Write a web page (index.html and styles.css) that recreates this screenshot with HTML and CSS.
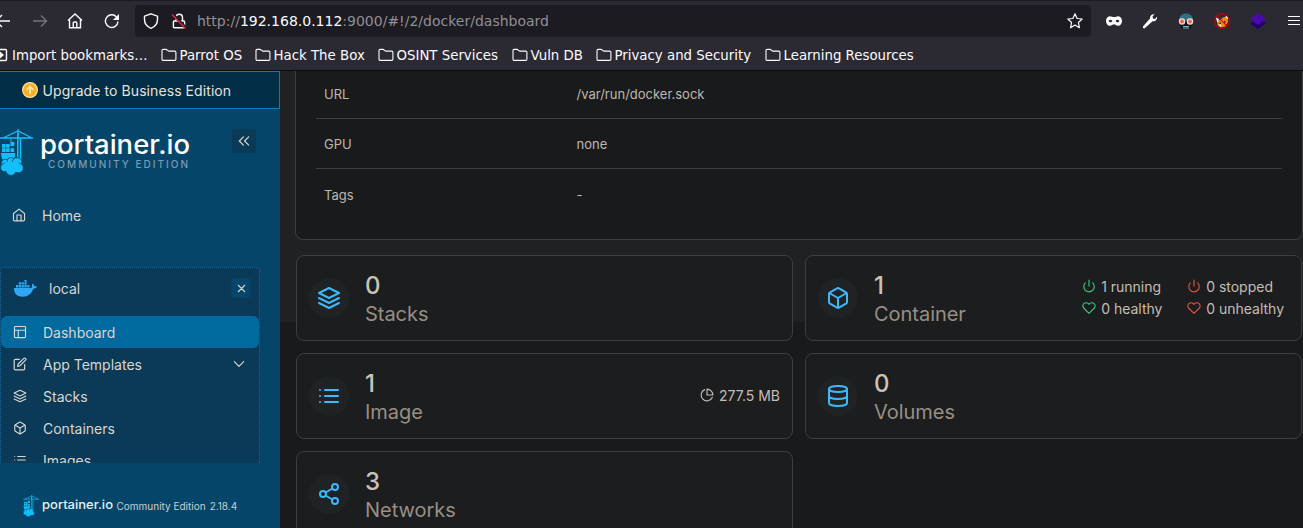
FILE: index.html
```html
<!DOCTYPE html>
<html lang="en">
<head>
<meta charset="utf-8">
<title>Portainer</title>
<link rel="stylesheet" href="styles.css">
</head>
<body>
<svg width="0" height="0" class="defs">
  <symbol id="folder" viewBox="0 0 16 16"><path d="M1 12.200V3.600c0-.7.5-1.200 1.200-1.200h2.800c.9 0 1.700 1.700 2.700 1.700h6c.7 0 1.200.5 1.200 1.200v6.900c0 .7-.5 1.200-1.200 1.200H2.200c-.7 0-1.200-.5-1.200-1.200z"/></symbol>
  <symbol id="layers" viewBox="0 0 24 24"><path d="M12 2 2 7l10 5 10-5-10-5zM2 17l10 5 10-5M2 12l10 5 10-5"/></symbol>
  <symbol id="box" viewBox="0 0 24 24"><path d="M21 8a2 2 0 0 0-1-1.730l-7-4a2 2 0 0 0-2 0l-7 4A2 2 0 0 0 3 8v8a2 2 0 0 0 1 1.730l7 4a2 2 0 0 0 2 0l7-4A2 2 0 0 0 21 16zM3.300 7 12 12l8.700-5M12 22V12"/></symbol>
  <symbol id="list" viewBox="0 0 24 24"><path d="M8 6h13M8 12h13M8 18h13M3 6h.01M3 12h.01M3 18h.01"/></symbol>
  <symbol id="power" viewBox="0 0 24 24"><path d="M18.400 6.600a9 9 0 1 1-12.770.04M12 2v10"/></symbol>
  <symbol id="heart" viewBox="0 0 24 24"><path d="M20.840 4.610a5.500 5.500 0 0 0-7.780 0L12 5.670l-1.060-1.060a5.500 5.500 0 0 0-7.780 7.780L12 21.230l8.840-8.840a5.500 5.500 0 0 0 0-7.780z"/></symbol>
  <symbol id="crane" viewBox="0 0 33 47">
    <path fill="none" stroke="currentColor" stroke-width="1.300" d="M0 9h33M3 9l15-7 14 7M18 0v9"/>
    <path fill="none" stroke="currentColor" stroke-width="1.500" d="M17.800 4v26M20.500 9v22"/>
    <path fill="currentColor" d="M10.500 10h1v3h2.800v4h-3.800zM2 15h3.600v3.700H2zM6.100 15h3.600v3.700H6.100zM2 19.300h3.600V23H2zM6.100 19.300h3.600V23H6.100zM10.500 19.300h3.600V23h-3.600zM1 24h14v4q-2 3-5 4H4q-3-3-3-8z"/>
    <g fill="currentColor" stroke="#044569" stroke-width=".8"><circle cx="5.500" cy="34.500" r="4.200"/><circle cx="11" cy="32.500" r="4"/><circle cx="17" cy="33.500" r="4.800"/><circle cx="4.800" cy="38.500" r="4.200"/><circle cx="18.500" cy="39" r="4.800"/><circle cx="11" cy="41.500" r="5"/></g>
    <path fill="currentColor" d="M5 33h13l3 5-4 5H7l-4-4z"/>
  </symbol>
</svg>
<div class="browser">
  <div class="toolbar">
    <svg class="nav-i i-back" viewBox="0 0 16 16"><path d="M15 8H1M7 2 1 8l6 6"/></svg>
    <svg class="nav-i i-fwd" viewBox="0 0 16 16"><path d="M1 8h13M9 2.500 14.500 8 9 13.500"/></svg>
    <svg class="nav-i i-home" viewBox="0 0 16 16"><path d="M1 7.500 8 1l7 6.500M2.500 6.500v8.200h11V6.500M6.200 14.500V10q0-1 1-1h1.600q1 0 1 1v4.500"/></svg>
    <svg class="nav-i i-reload" viewBox="0 0 16 16"><path d="M14 8.500A6.300 6.300 0 1 1 12.500 4"/><path fill="currentColor" stroke="none" d="M15 1v6H9z"/></svg>
    <div class="urlbar">
      <svg class="nav-i i-shield" viewBox="0 0 16 16"><path d="M8 .8 14.500 3.200v3.300c0 4-2.500 7.200-6.500 8.800C4 13.700 1.500 10.500 1.500 6.500V3.200z"/></svg>
      <svg class="nav-i i-lock" viewBox="0 0 16 16"><path d="M3.200 8h9.600q.8 0 .8.800v5q0 1-1 1H3.400q-1 0-1-1v-5q0-.8.8-.8zM5 8V4.500a3 3 0 0 1 6.500 0V8"/><path stroke="#1c1b22" stroke-width="3" d="M1.500 1 15 15"/><path stroke="#e22850" d="M1 1.500 14.500 15.500"/></svg>
      <div class="url">http://<b>192.168.0.112</b>:9000/#!/2/docker/dashboard</div>
      <svg class="nav-i i-star" viewBox="0 0 16 16"><path stroke-width="1.200" stroke-linejoin="round" d="m8 .8 2.100 4.700 5.100.5-3.800 3.500 1 5.200L8 12.100l-4.400 2.600 1-5.200L.8 6l5.100-.5z"/></svg>
    </div>
    <div class="exts">
      <svg class="ext" viewBox="0 0 16 16"><path fill="#fff" fill-rule="evenodd" d="M3.800 3.200C5.500 3.200 6.500 4.200 8 4.200s2.500-1 4.200-1C14.500 3.200 16 5.500 16 8s-1.500 4.800-3.800 4.800c-1.800 0-3-1.600-4.200-1.600s-2.400 1.600-4.200 1.600C1.500 12.800 0 10.500 0 8s1.500-4.800 3.800-4.800zM2.500 8.100c1.300 1.900 2.700 1.900 4 0-1.300-1.700-2.700-1.700-4 0zm7 0c1.300 1.900 2.700 1.900 4 0-1.300-1.700-2.700-1.700-4 0z"/></svg>
      <svg class="ext" viewBox="0 0 16 16"><path fill="#fff" d="M8 5.500C7.700 3 9.500 1 12.500 1.200L10.500 3.500l.5 2 2 .5 2-2.300C15.500 6.500 13.500 8.800 10.500 8.300L3 15q-1 .8-1.800 0t0-1.800z"/></svg>
      <svg class="ext" viewBox="0 0 16 16"><path fill="#2e6f80" d="M1 7C1 3 4 .5 8 .5S15 3 15 7v1.500H1z"/><path fill="#15161c" d="M2.500 8h11v7.500h-11z"/><path stroke="#67b8cb" d="M5 13.500h6M5 15h6"/><circle cx="4" cy="8.500" r="2.600" fill="#ef654c" stroke="#f6dfd8" stroke-width="1.200"/><circle cx="12" cy="8.500" r="2.600" fill="#ef654c" stroke="#f6dfd8" stroke-width="1.200"/></svg>
      <svg class="ext" viewBox="0 0 16 16"><path fill="#f28a12" d="m3.500 8 3-1.500L9 4.500l4-1L14 9l-3 4.500-4 1L3.500 12z"/><path fill="#fff" d="m1.800 4.500 3.200 1.500-1.500 4zm2.500 7 3 0-.3 2.700zm7-8.500 2.700.5v3.500z"/><path fill="#222" d="M5.500 9.500H7V11H5.500zM10 8h1.500v1.500H10z"/><g fill="none" stroke="#c90000" stroke-width="1.100"><circle cx="8" cy="8" r="7.400"/><path d="m2.800 2.800 10.400 10.400"/></g></svg>
      <svg class="ext" viewBox="0 0 16 16"><path fill="#21006e" d="m8 5.500 8 5L8 16l-8-5.500z"/><path fill="#4b0aad" d="m8 0 8 6-8 6-8-6z"/></svg>
      <svg class="ext" viewBox="0 0 16 16"><path stroke="#fbfbfe" stroke-width="1.200" d="M2 3.500h12M2 7.500h12M2 11.500h12"/></svg>
    </div>
  </div>
  <div class="bookmarks">
    <svg class="nav-i i-import" viewBox="0 0 16 16"><path d="M4 2.500h9.500q1 0 1 1v9q0 1-1 1H4M5 8h5"/><path fill="currentColor" stroke="none" d="m8 4.500 4 3.500-4 3.500z"/></svg>
    <span class="bm first">Import bookmarks…</span>
    <span class="bm" style="width:94px"><svg><use href="#folder"/></svg>Parrot OS</span>
    <span class="bm" style="width:123px"><svg><use href="#folder"/></svg>Hack The Box</span>
    <span class="bm" style="width:134px"><svg><use href="#folder"/></svg>OSINT Services</span>
    <span class="bm" style="width:84px"><svg><use href="#folder"/></svg>Vuln DB</span>
    <span class="bm" style="width:169px"><svg><use href="#folder"/></svg>Privacy and Security</span>
    <span class="bm"><svg><use href="#folder"/></svg>Learning Resources</span>
  </div>
</div>
<div class="app">
  <aside class="sidebar">
    <div class="upgrade">
      <svg width="16" height="16" viewBox="0 0 16 16"><circle cx="8" cy="8" r="7.400" fill="#fdb022" stroke="#fedf9c" stroke-width="1.200"/><path fill="none" stroke="#fff1d0" stroke-width="1.500" d="M8 12V4.700M4.800 7.800 8 4.500l3.200 3.300"/></svg>
      <span>Upgrade to Business Edition</span>
    </div>
    <div class="brand">
      <svg class="crane" width="33" height="47"><use href="#crane"/></svg>
      <svg class="wordmark" width="152" height="48"><text x="0" y="25" class="wm" textLength="150" lengthAdjust="spacingAndGlyphs">portainer.io</text><text x="8" y="39" class="wm-sub" textLength="140">COMMUNITY EDITION</text></svg>
      <span class="collapse"><svg class="ic" width="14" height="14" viewBox="0 0 24 24"><path d="m11 19-7-7 7-7M20 19l-7-7 7-7"/></svg></span>
    </div>
    <div class="home"><svg class="ic" width="14" height="14" viewBox="0 0 24 24"><path d="M2.500 9.500 12 2l9.500 7.500V20a2 2 0 0 1-2 2h-15a2 2 0 0 1-2-2zM8.500 22V12h7v10"/></svg><span>Home</span></div>
    <div class="env">
      <div class="env-head">
        <svg width="23" height="17" viewBox="0 0 23 17"><path fill="#2fa8f6" d="M0 8h16.800c1-.3 1.500-.8 1.300-2-.4-1 0-1.700.6-2.400 1 .7 1.400 1.500 1.500 2.600 1-.2 1.900 0 2.700.5-.6 1.300-1.800 1.900-3.400 1.800C17.500 13.800 14 16.700 8.500 16.700 3 16.700 0 13.500 0 8zM2 5h2.300v2.400H2zM4.800 5h2.300v2.400H4.800zM7.600 5h2.300v2.400H7.600zM10.400 5h2.300v2.400h-2.300zM13.200 5h2.200v2.400h-2.200zM4.800 2.200h2.300v2.300H4.800zM7.600 2.200h2.300v2.300H7.600zM10.400 2.200h2.300v2.300h-2.300zM10.400 0h2.300v1.700h-2.300z"/></svg>
        <span>local</span>
        <span class="close"><svg class="ic" width="13" height="13" viewBox="0 0 24 24"><path d="M18 6 6 18M6 6l12 12"/></svg></span>
      </div>
      <div class="item active"><svg class="ic" viewBox="0 0 24 24"><path d="M4 2.500h16q1.500 0 1.500 1.500v16q0 1.500-1.500 1.500H4q-1.500 0-1.500-1.500V4q0-1.500 1.500-1.500zM2.500 9h19M9 21.500V9"/></svg><span>Dashboard</span></div>
      <div class="item"><svg class="ic" viewBox="0 0 24 24"><path d="M11 4H4a2 2 0 0 0-2 2v14a2 2 0 0 0 2 2h14a2 2 0 0 0 2-2v-7M18.500 2.500a2.120 2.120 0 0 1 3 3L12 15l-4 1 1-4z"/></svg><span>App Templates</span><svg class="ic chev" viewBox="0 0 24 24"><path d="m4 8 8 8 8-8"/></svg></div>
      <div class="item"><svg class="ic"><use href="#layers"/></svg><span>Stacks</span></div>
      <div class="item"><svg class="ic"><use href="#box"/></svg><span>Containers</span></div>
      <div class="item"><svg class="ic"><use href="#list"/></svg><span>Images</span></div>
    </div>
    <div class="foot">
      <svg width="16" height="22" viewBox="0 0 33 47" preserveAspectRatio="none"><use href="#crane" width="33" height="47"/></svg>
      <svg class="foot-wm" width="72" height="22"><text x="0" y="14" class="wm small" textLength="71" lengthAdjust="spacingAndGlyphs">portainer.io</text></svg>
      <span>Community Edition</span><span class="ver">2.18.4</span>
    </div>
  </aside>
  <main class="main">
    <section class="info">
      <div class="row"><span>URL</span><span>/var/run/docker.sock</span></div>
      <div class="row"><span>GPU</span><span>none</span></div>
      <div class="row"><span>Tags</span><span>-</span></div>
    </section>
    <section class="cards">
      <div class="card"><span class="disc"><svg class="ic"><use href="#layers"/></svg></span><div class="txt"><div class="num">0</div><div class="lbl">Stacks</div></div></div>
      <div class="card"><span class="disc"><svg class="ic"><use href="#box"/></svg></span><div class="txt"><div class="num">1</div><div class="lbl">Container</div></div>
        <div class="stats">
          <span class="ok"><svg class="ic"><use href="#power"/></svg><i>1 running</i></span><span class="bad"><svg class="ic"><use href="#power"/></svg><i>0 stopped</i></span>
          <span class="ok"><svg class="ic"><use href="#heart"/></svg><i>0 healthy</i></span><span class="bad"><svg class="ic"><use href="#heart"/></svg><i>0 unhealthy</i></span>
        </div></div>
      <div class="card"><span class="disc"><svg class="ic"><use href="#list"/></svg></span><div class="txt"><div class="num">1</div><div class="lbl">Image</div></div>
        <div class="size"><svg class="ic" viewBox="0 0 24 24"><path d="M21.210 15.890A10 10 0 1 1 8 2.830M22 12A10 10 0 0 0 12 2v10z"/></svg><span>277.5 MB</span></div></div>
      <div class="card"><span class="disc"><svg class="ic" viewBox="0 0 24 24"><ellipse cx="12" cy="5" rx="9" ry="3"/><path d="M21 12c0 1.660-4 3-9 3s-9-1.340-9-3M3 5v14c0 1.660 4 3 9 3s9-1.340 9-3V5"/></svg></span><div class="txt"><div class="num">0</div><div class="lbl">Volumes</div></div></div>
      <div class="card"><span class="disc"><svg class="ic" viewBox="0 0 24 24"><circle cx="18" cy="5" r="3"/><circle cx="6" cy="12" r="3"/><circle cx="18" cy="19" r="3"/><path d="m8.590 13.510 6.830 3.980M15.410 6.510l-6.820 3.980"/></svg></span><div class="txt"><div class="num">3</div><div class="lbl">Networks</div></div></div>
    </section>
  </main>
</div>
</body>
</html>
```
FILE: styles.css
```css
* { box-sizing: border-box; }
body { margin: 0; width: 1303px; height: 528px; overflow: hidden; background: #191a1c; font-family: Inter, sans-serif; }
svg { flex: none; display: block; }
.defs { display: none; }
.browser { height: 71px; background: #2b2a33; border-top: 1px solid #1c1b22; border-bottom: 1px solid #0c0c0d; color: #fbfbfe; font-family: "DejaVu Sans", sans-serif; overflow: hidden; }
.toolbar { height: 39px; display: flex; align-items: center; }
.nav-i { width: 16px; height: 16px; fill: none; stroke: currentColor; stroke-width: 1.4; }
.i-back { margin-left: -5px; }
.i-fwd { margin-left: 21px; color: #75747b; }
.i-home { margin-left: 19px; margin-right: 21px; }
.urlbar { margin-left: 15px; width: 956px; height: 32px; margin-top: 1px; border-radius: 4px; background: #1c1b22; display: flex; align-items: center; padding: 0 8px; }
.i-lock { margin-left: 12px; }
.url { margin-left: 10px; font-size: 14px; color: #8f8f96; white-space: nowrap; flex: 1; }
.url b { font-weight: 400; color: #fbfbfe; }
.exts { display: flex; margin-left: 15px; gap: 20px; }
.ext { width: 16px; height: 16px; }
.bookmarks { height: 30px; display: flex; align-items: center; font-size: 13.33px; white-space: nowrap; }
.i-import { margin-left: -8px; }
.bm { display: flex; align-items: center; gap: 3px; flex: none; }
.bm.first { width: 148.500px; margin-left: 4px; }
.bm svg { width: 16px; height: 16px; fill: none; stroke: #fbfbfe; stroke-width: 1.1; }
.app { display: flex; height: 457px; }
.sidebar { width: 280px; flex: none; background: #044569; color: #d8d6d2; font-size: 14px; display: flex; flex-direction: column; overflow: hidden; }
.ic { fill: none; stroke: currentColor; stroke-width: 2; stroke-linecap: round; stroke-linejoin: round; }
.upgrade { height: 38px; background: #022d46; border: 1px solid #0080c0; border-left: 0; display: flex; align-items: center; padding-left: 22px; gap: 4.5px; color: #e4e2de; letter-spacing: .08px; }
.brand { height: 90px; padding-top: 20px; display: flex; align-items: flex-start; }
.crane, .foot svg:first-child { color: #13bef9; }
.wordmark { margin-left: 7px; overflow: visible; }
.wm { font: 500 26px Inter, sans-serif; fill: #fff; }
.wm-sub { font: 500 10px Inter, sans-serif; fill: #7c9ab0; }
.collapse { width: 24px; height: 24px; border-radius: 4px; background: #0b3a57; margin-left: 40px; display: grid; place-items: center; }
.home { height: 34px; display: flex; align-items: center; padding: 0 0 2px 12px; gap: 16px; margin-bottom: 34px; }
.env { width: 260px; height: 196px; overflow: hidden; background: #0a3a57; border: 1px dotted #12679a; border-bottom: 0; border-radius: 4px 4px 0 0; }
.env-head { height: 48px; padding: 0 8px 8px 13px; display: flex; align-items: center; }
.env-head > span:nth-child(2) { margin-left: 12px; flex: 1; }
.close { width: 20px; height: 20px; border-radius: 4px; background: #044569; display: grid; place-items: center; }
.item { height: 32px; padding: 0 13px 0 12px; display: flex; align-items: center; }
.item .ic { width: 14px; height: 14px; }
.item span { margin-left: 16px; flex: 1; }
.active { background: #006a9f; border-radius: 6px; }
.foot { height: 65px; padding: 21px 0 0 22.5px; display: flex; align-items: center; font-size: 10px; color: #c8cfd2; }
.foot-wm { margin: 0 3px 0 3px; }
.wm.small { font-size: 12.5px; font-weight: 500; fill: #e8eef0; }
.ver { margin-left: 4px; }
.main { flex: 1; min-width: 0; padding: 0 0 0 15px; background: linear-gradient(#202123 0 251px, #191a1c 251px); }
.info { height: 169px; border: 1px solid #3c3e41; border-top: 0; border-radius: 0 0 8px 8px; background: #191a1b; padding: 0 20px; color: #bdb8b0; font-size: 13px; }
.row { display: flex; height: 50px; border-bottom: 1px solid #3c3e41; align-items: center; padding-left: 8px; padding-top: 1px; }
.row:first-child { height: 48px; padding-top: 0; padding-bottom: 1px; }
.row:last-child { border-bottom: 0; }
.row span:first-child { width: 252.5px; }
.cards { display: grid; grid-template-columns: 497px 497px; grid-auto-rows: 86px; gap: 12px; padding: 15px 0 0 1px; }
.card { border: 1px solid #3c3e41; border-radius: 8px; background: #1c1d1f; display: flex; align-items: center; padding: 0 12px; }
.disc { width: 40px; height: 40px; border-radius: 50%; background: #1f2324; color: #3db8fd; display: grid; place-items: center; }
.disc .ic { width: 24px; height: 24px; }
.txt { margin-left: 16px; flex: 1; padding-top: 3px; }
.num { font-size: 24px; line-height: 29px; color: #c9c2b8; font-weight: 500; }
.lbl { font-size: 20px; line-height: 29px; color: #988f83; letter-spacing: -.03px; }
.stats { display: grid; grid-template-columns: 105px auto; grid-auto-rows: 22px; font-size: 14px; color: #c3beb6; align-items: center; padding: 0 5px 2px 0; }
.stats span { display: flex; align-items: center; gap: 5px; }
.stats i { font-style: normal; color: #c3beb6; }
.stats .ic, .size .ic { width: 14px; height: 14px; }
.ok { color: #38c17d; }
.bad { color: #e0503f; }
.size { display: flex; gap: 5px; align-items: center; font-size: 14px; color: #c3beb6; padding-bottom: 2px; }
```
